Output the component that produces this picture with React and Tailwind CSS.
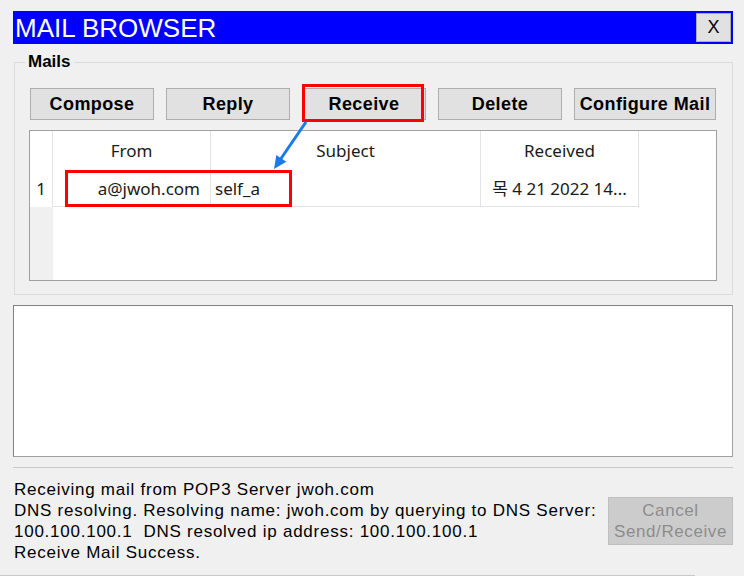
import React from "react";

const ui = { fontFamily: '"Liberation Sans", Arial, sans-serif' };
const seg = { fontFamily: '"Noto Sans", "Noto Sans CJK KR", sans-serif' };

function ToolButton({ label, w = "w-[124px]" }) {
  return (
    <button
      className={`${w} h-[32px] bg-[#e1e1e1] border border-[#adadad] text-[18px] font-bold text-black tracking-[0.4px] flex items-center justify-center`}
      style={ui}
    >
      {label}
    </button>
  );
}

function MailTable() {
  return (
    <div className="border border-[#a0a0a0] bg-white h-[151px] w-[688px] flex flex-col text-[17px] text-[#1a1a1a]" style={seg}>
      {/* header */}
      <div className="flex h-[40px]">
        <div className="w-[23px] border-r border-[#e3e3e3]" />
        <div className="w-[158px] border-r border-[#e3e3e3] flex items-center justify-center">From</div>
        <div className="w-[270px] border-r border-[#e3e3e3] flex items-center justify-center">Subject</div>
        <div className="w-[158px] border-r border-[#e3e3e3] flex items-center justify-center">Received</div>
      </div>
      {/* row */}
      <div className="flex h-[36px]">
        <div className="w-[23px] border-r border-[#e3e3e3] flex items-center justify-center">1</div>
        <div className="w-[158px] border-r border-b border-[#e3e3e3] flex items-center justify-end pr-[10px]">a@jwoh.com</div>
        <div className="w-[270px] border-r border-b border-[#e3e3e3] flex items-center pl-[4px]">self_a</div>
        <div className="w-[158px] border-r border-b border-[#e3e3e3] flex items-center justify-center whitespace-nowrap">
          목 4 21 2022 14...
        </div>
      </div>
      <div className="flex-1 flex">
        <div className="w-[23px] bg-[#f0f0f0]" />
      </div>
    </div>
  );
}

export default function App() {
  return (
    <div className="relative w-[744px] h-[576px] bg-[#f0f0f0] overflow-hidden flex flex-col" style={ui}>
      <div className="pt-[11px] pl-[13px] pr-[11px]">
        {/* title bar */}
        <div className="h-[33px] bg-[#0000ff] flex items-center justify-between pl-[2px] pr-[2px]">
          <span className="text-white text-[26px] leading-none">MAIL BROWSER</span>
          <button className="w-[35px] h-[29px] bg-[#e1e1e1] border border-[#adadad] text-[18px] text-black flex items-center justify-center">
            X
          </button>
        </div>

        {/* Mails group */}
        <fieldset className="mt-[8px] ml-[1px] border border-[#dcdcdc] pb-[13px]">
          <legend className="ml-[10px] px-[3px] text-[17px] font-bold leading-[20px] text-black">Mails</legend>
          <div className="pt-[16px] pl-[15px] flex gap-[12px]">
            <ToolButton label="Compose" />
            <ToolButton label="Reply" />
            <ToolButton label="Receive" />
            <ToolButton label="Delete" />
            <ToolButton label="Configure Mail" w="w-[142px]" />
          </div>
          <div className="mt-[10px] pl-[14px]">
            <MailTable />
          </div>
        </fieldset>

        {/* body view */}
        <div className="mt-[10px] h-[152px] bg-white border border-[#a0a0a0] border-t-[#828282] border-l-[#828282]" />

        <div className="mt-[10px] h-px bg-[#c8c8c8]" />

        {/* status */}
        <div className="mt-[11px] flex justify-between pl-[1px]">
          <div className="text-[17px] leading-[21px] tracking-[0.75px] text-black whitespace-pre">
            <div>Receiving mail from POP3 Server jwoh.com</div>
            <div>DNS resolving. Resolving name: jwoh.com by querying to DNS Server:</div>
            <div>100.100.100.1  DNS resolved ip address: 100.100.100.1</div>
            <div>Receive Mail Success.</div>
          </div>
          <button className="mt-[18px] w-[125px] h-[48px] bg-[#cccccc] border border-[#bfbfbf] text-[17px] leading-[21px] tracking-[0.6px] text-[#8c8c8c] flex flex-col items-center justify-center">
            <span>Cancel</span>
            <span>Send/Receive</span>
          </button>
        </div>
      </div>

      <div className="mt-auto w-[695px] h-px bg-[#c8c8c8]" />

      {/* annotations */}
      <svg className="absolute inset-0 pointer-events-none" width="744" height="576" viewBox="0 0 744 576">
        <rect x="303.5" y="85.5" width="119" height="35" fill="none" stroke="#ff0000" strokeWidth="3" />
        <rect x="66.5" y="171.5" width="224" height="34" fill="none" stroke="#ff0000" strokeWidth="3" />
        <line x1="306" y1="122" x2="280" y2="160" stroke="#1a7ae6" strokeWidth="3" />
        <polygon points="274,169 286.3,161.7 276.3,154.9" fill="#1a7ae6" />
      </svg>
    </div>
  );
}
